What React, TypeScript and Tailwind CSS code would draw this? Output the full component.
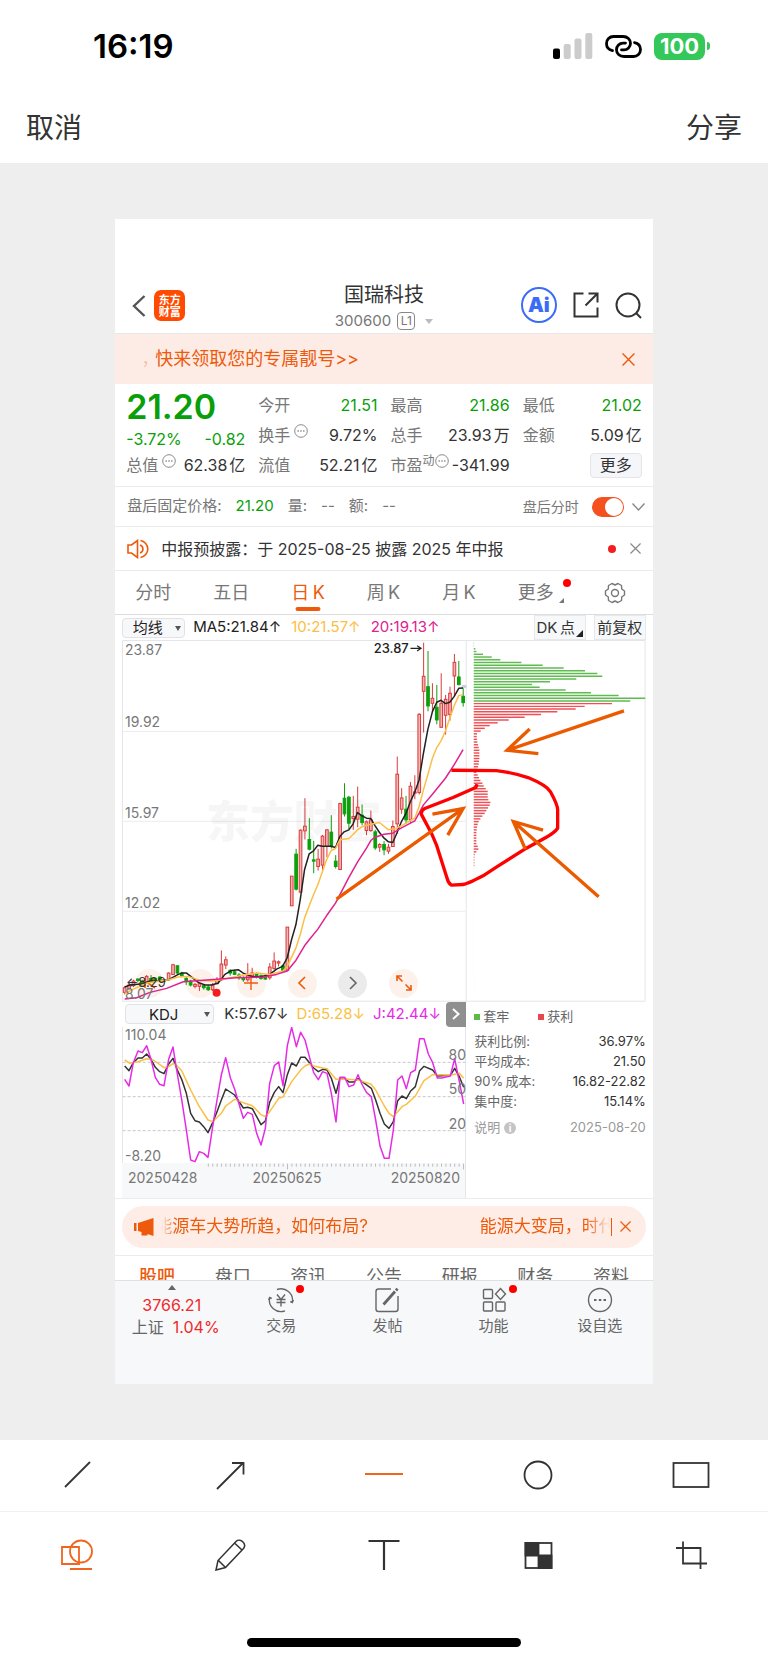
import { useState } from "react";
import type { ReactNode } from "react";

// color, body top, body bottom, wick top, wick bottom
type Candle = ["r" | "g", number, number, number, number];

const candles: Candle[] = [
  ["r", 1074, 1088, 1070, 1094],
  ["r", 1066, 1076, 1062, 1080],
  ["r", 1054, 1068, 1050, 1072],
  ["g", 1048, 1052, 1046, 1058],
  ["g", 1054, 1060, 1050, 1064],
  ["r", 1040, 1056, 1036, 1060],
  ["g", 1046, 1056, 1036, 1060],
  ["g", 1046, 1052, 1044, 1056],
  ["g", 1042, 1054, 1040, 1056],
  ["r", 1050, 1054, 1048, 1058],
  ["r", 1030, 1050, 1028, 1052],
  ["r", 1005, 1034, 1002, 1036],
  ["g", 1008, 1030, 1006, 1032],
  ["g", 1030, 1038, 1026, 1042],
  ["g", 1046, 1056, 1042, 1066],
  ["g", 1054, 1066, 1050, 1070],
  ["r", 1064, 1070, 1060, 1076],
  ["r", 1062, 1070, 1060, 1084],
  ["g", 1068, 1074, 1064, 1080],
  ["g", 1072, 1080, 1066, 1084],
  ["r", 1066, 1080, 1060, 1084],
  ["r", 1052, 1062, 1042, 1064],
  ["r", 1003, 1050, 962, 1054],
  ["r", 990, 1006, 980, 1018],
  ["g", 1022, 1030, 1018, 1038],
  ["g", 1026, 1034, 1020, 1036],
  ["g", 1036, 1044, 1030, 1050],
  ["g", 1044, 1050, 1040, 1056],
  ["r", 1038, 1050, 1000, 1056],
  ["r", 1030, 1038, 1014, 1044],
  ["g", 1032, 1040, 1028, 1046],
  ["g", 1038, 1046, 1034, 1050],
  ["g", 1040, 1048, 1034, 1050],
  ["r", 1012, 1044, 1000, 1050],
  ["r", 994, 1016, 968, 1020],
  ["r", 996, 1000, 992, 1010],
  ["g", 1008, 1022, 1004, 1026],
  ["r", 892, 1022, 892, 1022],
  ["r", 739, 828, 739, 828],
  ["g", 673, 778, 657, 782],
  ["r", 601, 787, 599, 788],
  ["r", 589, 603, 505, 629],
  ["g", 629, 658, 565, 662],
  ["g", 690, 694, 633, 730],
  ["r", 688, 710, 657, 722],
  ["r", 619, 706, 615, 722],
  ["r", 600, 650, 598, 682],
  ["g", 607, 650, 556, 656],
  ["g", 694, 710, 676, 716],
  ["r", 521, 719, 519, 721],
  ["g", 505, 552, 460, 560],
  ["g", 502, 580, 498, 598],
  ["r", 560, 566, 498, 600],
  ["r", 532, 568, 470, 592],
  ["g", 556, 578, 524, 586],
  ["r", 576, 602, 572, 616],
  ["r", 570, 602, 542, 606],
  ["g", 606, 654, 600, 660],
  ["r", 644, 652, 640, 666],
  ["g", 644, 660, 634, 676],
  ["r", 652, 664, 642, 672],
  ["r", 590, 650, 572, 650],
  ["r", 433, 582, 380, 612],
  ["r", 504, 538, 475, 552],
  ["g", 538, 570, 498, 582],
  ["r", 469, 570, 456, 580],
  ["r", 486, 490, 436, 508],
  ["r", 253, 488, 250, 494],
  ["r", 139, 184, 38, 308],
  ["g", 170, 228, 63, 244],
  ["r", 205, 220, 160, 246],
  ["g", 232, 270, 165, 283],
  ["r", 220, 292, 130, 294],
  ["r", 208, 256, 195, 314],
  ["r", 190, 254, 170, 272],
  ["r", 97, 138, 72, 200],
  ["g", 141, 164, 93, 166],
  ["g", 199, 218, 175, 230],
];

const ma5 =
  "44,1072 60,1066 100,1062 120,1054 150,1054 176,1050 205,1034 215,1030 230,1030 245,1042 265,1058 285,1066 305,1066 325,1060 345,1034 365,1022 385,1020 400,1030 425,1040 450,1042 480,1034 500,1018 518,1010 532,984 545,930 558,885 571,810 584,720 598,672 611,663 624,646 637,649 664,649 677,653 690,620 703,606 717,600 730,582 743,548 757,558 770,565 783,566 796,588 809,608 823,625 836,636 849,638 862,608 875,575 889,550 902,515 915,487 928,450 941,370 954,300 968,245 981,217 994,211 1007,221 1020,217 1033,200 1047,175 1060,174";
const ma10 =
  "44,1092 70,1078 110,1060 176,1050 205,1042 235,1040 270,1052 310,1054 345,1048 400,1036 440,1030 480,1034 519,1024 532,1010 558,955 571,915 584,865 598,828 611,795 624,765 637,727 650,690 664,662 677,656 690,630 717,626 730,614 743,600 757,590 783,583 809,578 836,600 862,595 889,580 915,565 928,530 941,480 954,435 968,385 981,353 994,333 1007,303 1020,265 1033,228 1047,197 1060,194";
const ma20 =
  "44,1108 80,1104 120,1088 170,1076 220,1056 300,1050 380,1044 460,1042 500,1034 532,1024 558,992 584,948 598,930 624,898 650,858 677,820 690,795 716,745 743,697 770,655 783,632 796,622 823,613 849,610 875,594 915,573 928,550 941,525 968,493 1007,445 1033,405 1060,359";

// right end of every chip bar, top to bottom
const chipsLocked = [223, 223, 227, 230, 250, 276, 302, 365, 429, 492, 556, 593, 608, 530, 451, 397, 420, 498, 574, 657, 737, 692];
const chipsProfit = [
  637, 555, 528, 473, 424, 375, 327, 294, 270, 255, 243, 232, 231, 232, 233, 235, 237, 239, 239, 239, 239, 238, 237, 235,
  232, 230, 234, 238, 242, 248, 252, 258, 264, 264, 264, 266, 272, 270, 265, 260, 255, 248, 242, 237, 234, 232, 231, 230,
  230, 230, 230, 230, 234, 236, 230, 225, 224, 224, 224, 224,
];

const kLine =
  "44,228 57,242 70,218 84,204 97,204 110,192 123,208 136,232 149,245 162,251 176,222 189,205 202,240 215,268 229,310 242,370 255,392 268,396 281,410 294,428 308,398 321,365 334,330 347,297 374,315 400,354 413,352 427,356 440,380 453,404 466,393 479,337 493,307 506,290 519,308 532,254 545,219 559,228 572,202 585,202 611,234 625,245 638,238 651,240 664,265 678,310 690,264 704,264 717,276 731,276 744,266 784,295 797,330 810,370 823,402 837,415 850,395 863,332 876,318 889,326 902,303 916,290 929,242 942,229 968,240 982,258 1021,256 1034,235 1048,260 1061,292";
const dLine =
  "44,210 60,220 84,215 110,206 130,210 162,233 176,230 189,221 202,228 215,242 242,300 268,350 294,390 308,395 334,370 347,348 374,328 400,338 427,347 453,374 466,380 479,365 506,325 519,321 545,275 572,240 585,228 598,222 611,228 638,234 651,236 678,268 704,267 744,270 784,283 797,300 823,348 837,370 850,380 876,350 889,343 916,318 942,272 968,254 995,254 1021,256 1048,250 1061,265";
const jLine =
  "44,268 57,288 70,218 84,183 97,188 110,167 123,208 136,262 149,283 162,287 176,208 189,171 202,252 215,328 229,420 242,510 255,515 268,485 281,490 294,502 308,410 321,330 334,255 347,203 361,263 374,298 387,342 400,385 413,367 427,373 440,430 453,465 466,415 479,280 493,227 506,216 519,287 532,167 545,112 559,170 572,127 585,150 598,200 611,248 625,269 638,245 651,250 664,310 678,396 690,262 704,262 717,290 731,285 744,254 757,285 770,308 784,320 797,390 810,468 823,505 837,505 850,420 863,270 876,258 889,296 902,248 916,240 929,146 942,146 955,192 968,218 982,264 995,264 1021,258 1034,206 1048,275 1061,342";

function Close({ className }: { className: string }) {
  return (
    <svg viewBox="0 0 12 12" className={className} fill="none" stroke="currentColor" strokeWidth="1.3">
      <path d="M.5.5l11 11M11.5.5l-11 11" />
    </svg>
  );
}

function Dots() {
  return (
    <svg viewBox="0 0 14 14" className="h-[14px] w-[14px] shrink-0 -translate-y-1" fill="none" stroke="#8a8a8a">
      <circle cx="7" cy="7" r="6.3" />
      <path d="M3.5 7h1.4M6.3 7h1.4M9.1 7h1.4" strokeWidth="1.4" />
    </svg>
  );
}

function StatusBar() {
  return (
    <div className="flex h-[92px] items-center justify-between pl-[93px] pr-[58px] text-black">
      <span className="text-[33px] font-semibold leading-none">16:19</span>
      <div className="flex items-center gap-3">
        <svg viewBox="0 0 40 26" className="h-[26px] w-10">
          <rect x="0" y="15.5" width="7" height="10.5" rx="2" />
          <rect x="10.7" y="11" width="7" height="15" rx="2" fill="#ccc" />
          <rect x="21.5" y="5.5" width="7" height="20.5" rx="2" fill="#ccc" />
          <rect x="32.3" y="0" width="7" height="26" rx="2" fill="#ccc" />
        </svg>
        <svg viewBox="0 0 37 23" className="h-[23px] w-[37px]" fill="none" stroke="#000" strokeWidth="2.8" strokeLinecap="round">
          <path d="M7.5 15.6C4 14.8 1.5 12 1.5 8.500C1.500 4.500 4.500 1.500 8.500 1.500H18C22.500 1.500 25.500 4.500 25.500 8.300C25.500 12 22.500 14.900 19 14.900H16.500" />
          <path d="M29.500 7.600C33 8.300 35.500 11 35.500 14.600C35.500 18.500 32.500 21.500 28.500 21.500H19C14.500 21.500 11.500 18.500 11.500 14.700C11.500 11 14.500 8.100 18 8.100H20.500" />
        </svg>
        <div className="flex items-center gap-0.5">
          <span className="flex h-[27px] w-[51px] items-center justify-center rounded-lg bg-[#34c759] text-[22px] font-bold leading-none text-white">
            100
          </span>
          <span className="h-2 w-[3px] rounded-r-full bg-[#34c759]" />
        </div>
      </div>
    </div>
  );
}

function StockHeader() {
  return (
    <header className="flex h-[115px] items-end justify-between border-b border-[#e8e8e8] px-[11px]">
      <div className="flex flex-1 items-center gap-2 pb-3">
        <button aria-label="返回" className="ml-1.5">
          <svg viewBox="0 0 14 22" className="h-[22px] w-[14px]" fill="none" stroke="#555" strokeWidth="2.4">
            <path d="M12.500 1L2 11l10.500 10" />
          </svg>
        </button>
        <span className="flex h-[31px] w-[31px] flex-col items-center justify-center rounded-[7px] bg-[#ff4a00] text-[11px] font-bold leading-[12px] text-white">
          <span>东方</span>
          <span>财富</span>
        </span>
      </div>
      <div className="text-center">
        <h1 className="text-xl leading-7 text-[#333]">国瑞科技</h1>
        <div className="flex items-center justify-center gap-1.5 text-[15px] leading-6 text-[#777]">
          300600
          <span className="flex h-[18px] w-[18px] items-center justify-center rounded border border-[#888] text-xs">L1</span>
          <span className="ml-1 border-x-4 border-t-[5px] border-x-transparent border-t-[#bbb]" />
        </div>
      </div>
      <div className="flex flex-1 items-center justify-end gap-4 pb-2.5">
        <button className="flex h-9 w-9 items-center justify-center rounded-full border-2 border-[#3b6cf6] text-xl font-black leading-none text-[#3b6cf6]">
          Ai
        </button>
        <button aria-label="转发">
          <svg viewBox="0 0 26 26" className="h-[26px] w-[26px]" fill="none" stroke="#333" strokeWidth="2">
            <path d="M10.500 1.500H1.500V24.500H24.500V15.500M15.500 1.500H24.500V10.500M24 2L12.500 13.500" />
          </svg>
        </button>
        <button aria-label="搜索">
          <svg viewBox="0 0 27 27" className="h-[27px] w-[27px]" fill="none" stroke="#333" strokeWidth="2">
            <circle cx="13" cy="13" r="11.500" />
            <path d="M21 21l5 5" />
          </svg>
        </button>
      </div>
    </header>
  );
}

function Cell({ label, value, unit, extra, green }: { label: string; value: string; unit?: string; extra?: ReactNode; green?: boolean }) {
  return (
    <div className="flex h-[30px] items-center justify-between whitespace-nowrap">
      <span className="flex items-center text-[#777]">
        {label}
        {extra}
      </span>
      <span className={green ? "text-[#0a9f0a]" : "text-[#333]"}>
        {value}
        {unit && <span className="ml-0.5">{unit}</span>}
      </span>
    </div>
  );
}

function Quote() {
  return (
    <section className="grid grid-cols-4 gap-x-[13px] border-b border-[#ececec] px-[11px] py-1.5 text-base">
      <div>
        <div className="flex h-[34px] items-center text-[34px] font-semibold leading-none text-[#0a9f0a]">21.20</div>
        <div className="flex h-[26px] items-center justify-between pt-1 text-[#0a9f0a]">
          <span>-3.72%</span>
          <span>-0.82</span>
        </div>
        <Cell label="总值" extra={<span className="ml-1"><Dots /></span>} value="62.38" unit="亿" />
      </div>
      <div>
        <Cell label="今开" value="21.51" green />
        <Cell label="换手" extra={<span className="ml-1"><Dots /></span>} value="9.72%" />
        <Cell label="流值" value="52.21" unit="亿" />
      </div>
      <div>
        <Cell label="最高" value="21.86" green />
        <Cell label="总手" value="23.93" unit="万" />
        <Cell
          label="市盈"
          extra={
            <>
              <span className="-translate-y-1 text-xs">动</span>
              <Dots />
            </>
          }
          value="-341.99"
        />
      </div>
      <div>
        <Cell label="最低" value="21.02" green />
        <Cell label="金额" value="5.09" unit="亿" />
        <div className="flex h-[30px] items-center justify-end">
          <button className="h-[25px] w-[52px] rounded-sm border border-[#e3e5ea] bg-[#f5f6f9] leading-none text-[#333]">更多</button>
        </div>
      </div>
    </section>
  );
}

function AfterHours() {
  const [on, setOn] = useState(true);
  return (
    <section className="flex h-10 items-center border-b border-[#ececec] pl-3 pr-2 text-[15px] text-[#777]">
      <span>盘后固定价格:</span>
      <span className="ml-[14px] text-[#0a9f0a]">21.20</span>
      <span className="ml-[14px]">量:</span>
      <span className="ml-[14px]">--</span>
      <span className="ml-[14px]">额:</span>
      <span className="ml-[14px]">--</span>
      <label className="ml-auto flex items-center gap-[13px] text-sm">
        盘后分时
        <input type="checkbox" checked={on} onChange={() => setOn(!on)} className="peer sr-only" />
        <span className="flex h-5 w-8 items-center rounded-full bg-[#ccc] p-px peer-checked:justify-end peer-checked:bg-[#f4511e]">
          <span className="h-[18px] w-[18px] rounded-full bg-white" />
        </span>
      </label>
      <svg viewBox="0 0 13 8" className="ml-2 h-2 w-[13px]" fill="none" stroke="#888" strokeWidth="1.4">
        <path d="M.5.5l6 6.500 6-6.500" />
      </svg>
    </section>
  );
}

function PeriodTabs() {
  const tabs = ["分时", "五日", "日K", "周K", "月K"];
  return (
    <nav className="flex h-11 items-center justify-between border-b border-[#dcdcdc] pl-5 pr-[27px] text-lg text-[#777]">
      {tabs.map((t) => (
        <button key={t} className={t === "日K" ? "relative text-[#ee5a0b]" : "relative"}>
          {t.replace("K", "\u2009K")}
          {t === "日K" && <span className="absolute -bottom-1 left-1/2 h-1 w-[25px] -translate-x-1/2 rounded-full bg-[#ee5a0b]" />}
        </button>
      ))}
      <button className="relative mr-2">
        更多
        <span className="absolute -right-[10px] bottom-1 border-b-[5px] border-l-[5px] border-b-[#777] border-l-transparent" />
        <span className="absolute -right-[17px] top-0 h-2 w-2 rounded-full bg-[#f00]" />
      </button>
      <button aria-label="设置">
        <svg viewBox="0 0 22 22" className="h-[22px] w-[22px]" fill="none" stroke="#777" strokeWidth="1.400" strokeLinejoin="round">
          <path d="M8 1.500L11 3l3-1.500 3.500 2 .2 3.500L20.500 9v4l-2.800 2-.2 3.500-3.500 2L11 19l-3 1.500-3.500-2-.2-3.500L1.500 13V9l2.800-2 .2-3.500z" />
          <circle cx="11" cy="11" r="3.500" />
        </svg>
      </button>
    </nav>
  );
}

function IndicatorSelect({ label, value, className }: { label: string; value: string; className: string }) {
  return (
    <span className={`relative inline-flex ${className}`}>
      <select
        aria-label={label}
        defaultValue={value}
        className="h-5 w-full appearance-none rounded-sm border border-[#e0e2e8] bg-[#f7f8fa] pr-3 text-center text-[15px] leading-none text-[#222]"
      >
        <option>{value}</option>
      </select>
      <span className="pointer-events-none absolute right-1 top-2 border-x-[3px] border-t-[5px] border-x-transparent border-t-[#555]" />
    </span>
  );
}

function FloatingTools() {
  const round = "flex h-[29px] w-[29px] items-center justify-center rounded-full bg-[#fdf1ec]";
  return (
    <div className="absolute bottom-1 left-[13px] flex w-[283px] justify-between text-[#ee5a0b]">
      <button aria-label="后退" className={round}>
        <svg viewBox="0 0 20 20" className="h-5 w-5" fill="none" stroke="currentColor" strokeWidth="1.600">
          <path d="M5 5v10M15 5l-7 5 7 5" />
        </svg>
      </button>
      <button aria-label="缩小" className={round} />
      <button aria-label="放大" className={round}>
        <svg viewBox="0 0 20 20" className="h-5 w-5" fill="none" stroke="currentColor" strokeWidth="1.400">
          <path d="M3 10h14M10 3v14" />
        </svg>
      </button>
      <button aria-label="左移" className={round}>
        <svg viewBox="0 0 20 20" className="h-5 w-5" fill="none" stroke="currentColor" strokeWidth="1.600">
          <path d="M13 4l-6 6 6 6" />
        </svg>
      </button>
      <button aria-label="右移" className="flex h-[29px] w-[29px] items-center justify-center rounded-full bg-[#ebebeb] text-[#666]">
        <svg viewBox="0 0 20 20" className="h-5 w-5" fill="none" stroke="currentColor" strokeWidth="1.600">
          <path d="M7 4l6 6-6 6" />
        </svg>
      </button>
      <button aria-label="全屏" className={round}>
        <svg viewBox="0 0 20 20" className="h-5 w-5" fill="none" stroke="currentColor" strokeWidth="1.600">
          <path d="M3 8V3h5M3.500 3.500l5 5M17 12v5h-5M16.500 16.500l-5-5" />
        </svg>
      </button>
    </div>
  );
}

function Arrow({ d }: { d: string }) {
  return <path d={d} stroke="#ec5a00" strokeWidth="10" fill="none" />;
}

function KChart() {
  return (
    <div className="relative">
      <FloatingTools />
      <svg viewBox="0 0 524 362" className="pointer-events-none relative block h-auto w-full">
        <g fill="none" stroke="#e4e6ea">
          <path d="M.5.500H523.500V361.500H.5zM344.500 0V362" />
          <path d="M0 91.500H344M0 181.500H344M0 271.500H344" stroke="#ececf0" />
        </g>
        <text x="84" y="198" fontSize="44" fontWeight="900" fill="#000" opacity="0.03">
          东方财富
        </text>
        <g transform="translate(-12 -10) scale(0.333333)">
          {candles.map(([c, top, bottom, high, low], i) => {
            const x = 44 + i * 13.2;
            const color = c === "r" ? "#d93a3a" : "#0aa00a";
            return (
              <g key={i} stroke={color} strokeWidth="3">
                <path d={`M${x} ${high}V${top}M${x} ${bottom}V${low}`} />
                <rect x={x - 4} y={top} width="8" height={bottom - top} fill={c === "r" ? "#f3b4b4" : color} />
              </g>
            );
          })}
          <rect x="1056" y="165" width="14" height="9" fill="#ccd0da" />
          <g fill="none" strokeWidth="4.500" strokeLinejoin="round">
            <polyline points={ma5} stroke="#222" />
            <polyline points={ma10} stroke="#fbbf45" />
            <polyline points={ma20} stroke="#e0218f" />
          </g>
          <circle cx="320" cy="1089" r="12" fill="#f51d1d" />
          <path d="M902 55h30M922 47l12 8-12 8" stroke="#222" strokeWidth="3.500" fill="none" />
        </g>
        <g transform="translate(278 -10) scale(0.333333)">
          {chipsLocked.map((x, i) => (
            <path key={i} d={`M222 ${40 + i * 8.23}H${x}`} stroke="#5fba50" strokeWidth="4.400" />
          ))}
          {chipsProfit.map((x, i) => (
            <path key={i} d={`M222 ${221 + i * 8.24}H${x}`} stroke="#ee5055" strokeWidth="4.400" />
          ))}
          <path d="M223 715V1090" stroke="#f7c9c9" strokeWidth="1.500" strokeDasharray="2 6" opacity="0.500" />
          <path
            d="M155 421L290 422Q340 428 385 443Q440 466 452 485Q474 525 474 540V595Q465 608 440 622L380 655L290 712L250 738Q200 764 190 764L155 766Q145 760 142 745L110 645L95 610L64 552Q66 540 75 536L160 503L228 473L232 463"
            stroke="#f00"
            strokeWidth="10"
            fill="none"
            strokeLinejoin="round"
          />
          <Arrow d="M-190 808L190 536M98 553L190 536L144 616" />
          <Arrow d="M673 243L322 361M390 297L322 361L416 371" />
          <Arrow d="M597 801L341 575M430 601L341 575L377 658" />
        </g>
        <g fontSize="14" fill="#777">
          <text x="3" y="15">23.87</text>
          <text x="3" y="87">19.92</text>
          <text x="3" y="178">15.97</text>
          <text x="3" y="268">12.02</text>
          <text x="3" y="359">8.07</text>
          <text x="287" y="13" fontSize="13" fill="#222" fontWeight="500" textAnchor="end">23.87</text>
          <text x="4" y="347" fontSize="13" fill="#333">←8.29</text>
        </g>
      </svg>
    </div>
  );
}

function KdjChart() {
  const ticks = Array.from({ length: 59 }, (_, i) => 295 + i * 13.2);
  return (
    <svg viewBox="0 0 344 171" className="block h-auto w-full">
      <rect x="0" y="136" width="344" height="35" fill="#f7f8fa" />
      <path d="M.5 0V136M343.500 0V171" stroke="#e4e6ea" />
      <g transform="translate(-12 -37) scale(0.333333)" fill="none" strokeLinejoin="round">
        <path d="M38 217H1068M38 320H1068M38 422H1068" stroke="#c8c8c8" strokeWidth="3" strokeDasharray="9 6" />
        {ticks.map((x, i) => (
          <path key={i} d={`M${x} 521V${i === 18 || i === 58 ? 538 : 530}`} stroke="#bbb" strokeWidth="3" />
        ))}
        <polyline points={kLine} stroke="#333" strokeWidth="4.500" />
        <polyline points={dLine} stroke="#fbbf45" strokeWidth="4.500" />
        <polyline points={jLine} stroke="#e62be6" strokeWidth="4.500" />
      </g>
      <g fontSize="14" fill="#777">
        <text x="3" y="13">110.04</text>
        <text x="3" y="134">-8.20</text>
        <text x="344" y="33" textAnchor="end">80</text>
        <text x="344" y="67" textAnchor="end">50</text>
        <text x="344" y="102" textAnchor="end">20</text>
        <text x="6" y="156">20250428</text>
        <text x="165" y="156" textAnchor="middle">20250625</text>
        <text x="338" y="156" textAnchor="end">20250820</text>
      </g>
    </svg>
  );
}

function ChipInfo() {
  const rows = [
    ["获利比例:", "36.97%"],
    ["平均成本:", "21.50"],
    ["90%\u2009成本:", "16.82-22.82"],
    ["集中度:", "15.14%"],
  ];
  return (
    <div className="flex-1 pl-2 text-[13px] text-[#666]">
      <div className="flex h-[30px] items-center gap-[3px]">
        <span className="h-1.5 w-1.5 bg-[#5bb947]" />
        套牢
        <span className="ml-[26px] h-1.5 w-1.5 bg-[#e8484d]" />
        获利
      </div>
      <dl>
        {rows.map(([k, v]) => (
          <div key={k} className="flex h-5 items-center justify-between">
            <dt>{k}</dt>
            <dd className="text-[#333]">{v}</dd>
          </div>
        ))}
      </dl>
      <div className="mt-1 flex h-6 items-center text-[#999]">
        说明
        <span className="ml-1 flex h-3 w-3 items-center justify-center rounded-full bg-[#c4c4c4] text-[10px] font-bold leading-none text-white">i</span>
        <span className="ml-auto">2025-08-20</span>
      </div>
    </div>
  );
}

function Notice() {
  return (
    <div className="border-y border-[#ececec] px-[7px] py-[7px]">
      <div className="flex h-[42px] items-center rounded-full bg-[#fdede6] pl-3 pr-[15px] text-[17px] text-[#ee5a0b]">
        <svg viewBox="0 0 20 18" className="mr-2 h-[18px] w-5 shrink-0" fill="currentColor">
          <path d="M0 5h2.500v8H0zM4 5l15.500-5v18l-6-2v1.500h-6V14L4 13z" />
        </svg>
        <div className="flex flex-1 items-center justify-between overflow-hidden whitespace-nowrap [mask-image:linear-gradient(to_right,transparent,#000_14px,#000_calc(100%-24px),transparent)]">
          <span className="flex">
            <span className="flex w-[10px] justify-end overflow-hidden">能</span>源车大势所趋，如何布局?
          </span>
          <span className="w-[130px] overflow-hidden">能源大变局，时代</span>
        </div>
        <span className="ml-px mr-2 h-[18px] w-px bg-[#ee5a0b]" />
        <button aria-label="关闭公告">
          <Close className="h-[11px] w-[11px]" />
        </button>
      </div>
    </div>
  );
}

function BottomItem({ label, dot, children }: { label: string; dot?: boolean; children: ReactNode }) {
  return (
    <button className="relative flex flex-1 flex-col items-center pt-0.5 text-[#666]">
      <svg viewBox="0 0 26 26" className="h-[26px] w-[26px]" fill="none" stroke="currentColor" strokeWidth="1.400">
        {children}
      </svg>
      <span className="text-[15px] leading-[26px]">{label}</span>
      {dot && <span className="absolute left-1/2 top-0 ml-[15px] h-2 w-2 rounded-full bg-[#f00]" />}
    </button>
  );
}

function BottomBar() {
  return (
    <footer className="flex h-[104px] items-start border-t border-[#dfe1e5] bg-[#f7f8fa] pt-1">
      <button className="flex w-[113px] flex-col items-center text-base leading-[22px] text-[#f02a2a]">
        <span className="mb-1 border-x-4 border-b-[5px] border-x-transparent border-b-[#666]" />
        <span>3766.21</span>
        <span className="whitespace-nowrap pl-2">
          <span className="text-[#666]">上证</span>&nbsp; 1.04%
        </span>
      </button>
      <BottomItem label="交易" dot>
        <path d="M9 2.500A11.500 11.500 0 0 1 24.300 15.500l-2-1M24.300 15.500l1.200-2.500M17 23.800A11.500 11.500 0 0 1 1.700 10.500l2 1M1.700 10.500L.5 13M9 7.500l4 5 4-5M8.500 12.500h9M8.500 15.500h9M13 12.500V19.500" />
      </BottomItem>
      <BottomItem label="发帖">
        <path d="M17 2H4.500A2.500 2.500 0 0 0 2 4.500V22A2.500 2.500 0 0 0 4.500 24.500H21.500A2.500 2.500 0 0 0 24 22V9" />
        <path d="M9.500 17.500L21 4.500M22 3.500l1.500-1.800" strokeWidth="2.800" />
      </BottomItem>
      <BottomItem label="功能" dot>
        <rect x="2.500" y="2.500" width="9" height="9" rx="1" />
        <rect x="2.500" y="15" width="9" height="9" rx="1" />
        <rect x="15" y="15" width="9" height="9" rx="1" />
        <path d="M19.500 1.500l5 5.500-5 5.500-5-5.500z" />
      </BottomItem>
      <BottomItem label="设自选">
        <circle cx="13" cy="13" r="11.500" />
        <path d="M7 13h2.500M11.800 13h2.500M16.500 13h2.500" strokeWidth="2.200" />
      </BottomItem>
    </footer>
  );
}

function StockScreen() {
  const sections = ["股吧", "盘口", "资讯", "公告", "研报", "财务", "资料"];
  return (
    <main className="mx-auto w-[70%] overflow-hidden bg-white">
      <StockHeader />
      <div className="flex h-[50px] items-center justify-between bg-[#fdece6] pl-[26px] pr-[18px] text-lg text-[#ee5a0b]">
        <span className="flex">
          <span className="w-[14px] overflow-hidden opacity-30">，</span>快来领取您的专属靓号&gt;&gt;
        </span>
        <button aria-label="关闭">
          <Close className="h-[13px] w-[13px]" />
        </button>
      </div>
      <Quote />
      <AfterHours />
      <section className="flex h-11 items-center border-b border-[#ececec] pl-3 pr-3 text-base text-[#333]">
        <svg viewBox="0 0 22 20" className="mr-3 h-5 w-[22px]" fill="none" stroke="#ee5a0b" strokeWidth="1.600">
          <path d="M1 6h3.500L10.500 1.500v17L4.500 14H1zM13 6a4.200 4.200 0 0 1 0 8M13.500 1.500a8.600 8.600 0 0 1 0 17" />
        </svg>
        <span>中报预披露：于 2025-08-25 披露 2025 年中报</span>
        <span className="ml-auto mr-[14px] h-2 w-2 rounded-full bg-[#f51d1d]" />
        <button aria-label="关闭披露提醒" className="text-[#888]">
          <Close className="h-[11px] w-[11px]" />
        </button>
      </section>
      <PeriodTabs />
      <div className="px-[7px]">
        <div className="flex h-[25px] items-center whitespace-nowrap text-[15px]">
          <IndicatorSelect label="主图指标" value="均线" className="w-[63px]" />
          <span className="ml-2 text-[#222]">MA5:21.84↑</span>
          <span className="ml-2.5 text-[#fbbf45]">10:21.57↑</span>
          <span className="ml-2.5 text-[#e0218f]">20:19.13↑</span>
          <button className="relative ml-auto h-[25px] w-[52px] border border-[#e6e8ec] bg-[#f7f8fa] pr-2 leading-none text-[#333]">
            DK{"\u2009"}点
            <span className="absolute bottom-0.5 right-0.5 border-b-[7px] border-l-[7px] border-b-[#222] border-l-transparent" />
          </button>
          <button className="ml-2 h-[25px] w-[52px] border border-[#e6e8ec] bg-[#f7f8fa] leading-none text-[#333]">前复权</button>
        </div>
        <KChart />
        <div className="flex">
          <div className="w-[344px]">
            <div className="flex h-[25px] items-center whitespace-nowrap text-[15px]">
              <IndicatorSelect label="副图指标" value="KDJ" className="ml-[3px] w-[89px]" />
              <span className="ml-2.5 text-[#333]">K:57.67↓</span>
              <span className="ml-2 text-[#fbbf45]">D:65.28↓</span>
              <span className="ml-2 text-[#e62be6]">J:42.44↓</span>
              <button aria-label="展开" className="ml-auto flex h-[25px] w-5 items-center justify-center rounded-l bg-[#8f8f8f]">
                <svg viewBox="0 0 8 12" className="h-3 w-2" fill="none" stroke="#fff" strokeWidth="2">
                  <path d="M1 1l5.500 5L1 11" />
                </svg>
              </button>
            </div>
            <KdjChart />
          </div>
          <ChipInfo />
        </div>
      </div>
      <Notice />
      <nav className="flex h-[24px] justify-around overflow-hidden px-1 pt-3 text-lg leading-none text-[#666]">
        {sections.map((s, i) => (
          <a key={s} href="#" className={i === 0 ? "font-medium text-[#ee5a0b]" : ""}>
            {s}
          </a>
        ))}
      </nav>
      <BottomBar />
    </main>
  );
}

function Tool({ label, active, children }: { label: string; active?: boolean; children: ReactNode }) {
  return (
    <button aria-label={label} className={`flex flex-1 justify-center ${active ? "text-[#f0651f]" : "text-[#333]"}`}>
      <svg viewBox="0 0 40 32" className="h-8 w-10" fill="none" stroke="currentColor" strokeWidth="1.800">
        {children}
      </svg>
    </button>
  );
}

export default function App() {
  return (
    <div className="min-h-screen bg-white [font-family:Inter,'Noto_Sans_CJK_SC',sans-serif]">
      <StatusBar />
      <div className="flex h-[71px] items-center justify-between px-[26px] text-[28px] text-[#333]">
        <button>取消</button>
        <button>分享</button>
      </div>
      <div className="bg-[#eee] py-14">
        <StockScreen />
      </div>
      <div className="flex h-[72px] items-center border-b border-[#f0f0f0]">
        <Tool label="直线">
          <path d="M8 28L33 3" />
        </Tool>
        <Tool label="箭头">
          <path d="M7 30L33 4M22 4H33.500V15.500" />
        </Tool>
        <Tool label="横线" active>
          <path d="M1 15H39" strokeWidth="2.200" />
        </Tool>
        <Tool label="圆形">
          <circle cx="20" cy="16" r="13.500" />
        </Tool>
        <Tool label="矩形">
          <rect x="2.500" y="4" width="35" height="24" />
        </Tool>
      </div>
      <div className="flex h-[86px] items-center">
        <Tool label="图形" active>
          <path d="M5 8H22V25H5zM13 30H35" />
          <circle cx="24" cy="12.500" r="11" />
        </Tool>
        <Tool label="画笔">
          <path d="M6 31L8 21.500L26 2.500C28 .5 31 1 33 3C35 5 35 7.500 33.500 9.500L15.500 28.500zM8.500 21.500L15.500 28.500M25 4.500L32 11" strokeWidth="1.500" />
        </Tool>
        <Tool label="文字">
          <path d="M4.500 2H35.500M20 2V31" strokeWidth="2.200" />
        </Tool>
        <Tool label="马赛克">
          <rect x="7.500" y="4" width="26" height="25" />
          <path d="M7.500 4H20.500V16.500H7.500zM20.500 16.500H33.500V29H20.500z" fill="currentColor" />
        </Tool>
        <Tool label="裁剪">
          <path d="M5 9H29.500V30M12 2.500V24.500H36" />
        </Tool>
      </div>
      <div className="flex justify-center pb-[14px] pt-10">
        <span className="h-[9px] w-[274px] rounded-full bg-black" />
      </div>
    </div>
  );
}
